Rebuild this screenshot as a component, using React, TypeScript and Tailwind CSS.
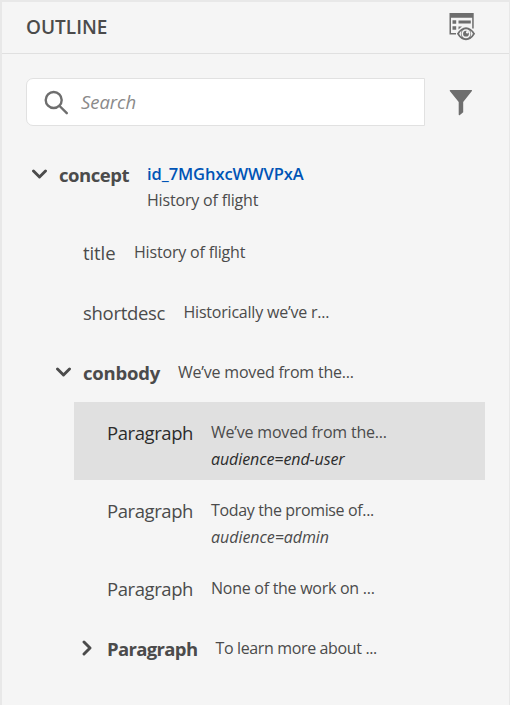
type Row = {
  name: string;
  nameClass: string;
  indent: string;
  text: string;
  textClass: string;
  bold?: boolean;
  id?: string;
  attr?: string;
  attrClass?: string;
  arrow?: "down" | "right";
  selected?: boolean;
};

const rows: Row[] = [
  { name: "concept", nameClass: "w-[88px] tracking-[-0.48px]", indent: "pl-[57px]", id: "id_7MGhxcWWVPxA", text: "History of flight", textClass: "tracking-[-0.18px]", bold: true, arrow: "down" },
  { name: "title", nameClass: "w-[51px] tracking-[-0.08px]", indent: "pl-[81px]", text: "History of flight", textClass: "tracking-[-0.18px]" },
  { name: "shortdesc", nameClass: "w-[100.5px] tracking-[-0.3px]", indent: "pl-[81px]", text: "Historically we’ve r...", textClass: "tracking-[-0.21px]" },
  { name: "conbody", nameClass: "w-[95px] tracking-[-0.22px]", indent: "pl-[81px]", text: "We’ve moved from the...", textClass: "tracking-[-0.21px]", bold: true, arrow: "down" },
  { name: "Paragraph", nameClass: "w-[104px] tracking-[-0.42px]", indent: "pl-[105px]", text: "We’ve moved from the...", textClass: "tracking-[-0.21px]", attr: "audience=end-user", attrClass: "tracking-[-0.08px]", selected: true },
  { name: "Paragraph", nameClass: "w-[104px] tracking-[-0.42px]", indent: "pl-[105px]", text: "Today the promise of...", textClass: "tracking-[-0.36px]", attr: "audience=admin", attrClass: "tracking-[-0.04px]" },
  { name: "Paragraph", nameClass: "w-[104px] tracking-[-0.42px]", indent: "pl-[105px]", text: "None of the work on ...", textClass: "tracking-[-0.27px]" },
  { name: "Paragraph", nameClass: "w-[108.5px] tracking-[-0.65px]", indent: "pl-[105px]", text: "To learn more about ...", textClass: "tracking-[-0.36px]", bold: true, arrow: "right" },
];

function Chevron({ direction }: { direction: "down" | "right" }) {
  return (
    <svg width="16" height="16" viewBox="0 0 16 16" fill="none" stroke="#4b4b4b" strokeWidth="2.9" strokeLinecap="round" strokeLinejoin="round">
      <path d={direction === "down" ? "M2.5 5l6 6 6-6" : "M5 2l6 6-6 6"} />
    </svg>
  );
}

function TreeRow({ row }: { row: Row }) {
  const twoLines = row.id || row.attr;
  return (
    <div className={`relative flex ${twoLines ? "h-[78px]" : "h-[60px]"} ${row.indent}`}>
      {row.selected && <div className="absolute inset-y-0 left-[72px] right-[24px] bg-[#e0e0e0]" />}
      <div className={`relative shrink-0 pt-[18px] text-[18.5px] leading-[26px] ${row.nameClass} ${row.bold ? "font-bold" : ""} ${row.selected ? "text-[#2c2c2c]" : "text-[#4b4b4b]"}`}>
        {row.arrow && (
          <span className="absolute top-[22px] -left-[28px]">
            <Chevron direction={row.arrow} />
          </span>
        )}
        {row.name}
      </div>
      <div className="relative whitespace-nowrap pt-[17px] text-[16px] leading-[26px] text-[#4b4b4b]">
        {row.id && <div className="text-[16.5px] font-semibold tracking-[-0.08px] text-[#0054b6]">{row.id}</div>}
        <div className={row.textClass}>{row.text}</div>
        {row.attr && <div className={`relative top-px italic ${row.attrClass} ${row.selected ? "text-[#2c2c2c]" : ""}`}>{row.attr}</div>}
      </div>
    </div>
  );
}

function PreviewIcon() {
  return (
    <svg width="27" height="29" viewBox="0 0 27 29" fill="#6e6e6e">
      <path d="M.5 0h24.2v15.5h-1.5V4.8H2v15.3h5v1.5H.5z" />
      <path d="M3.5 7.2h3.7v3.5H3.5zM9.5 7.5h12.3v3H9.5zM3.5 13.2h3.7v3.5H3.5zM9.5 13.5h3.5q-1.5 1-3.5 3z" />
      <path d="M7.9 20.7q4-6.5 9.1-6.5t9.1 6.5q-4 6.5-9.1 6.5t-9.1-6.5z" />
      <path d="M10.1 20.7q1-2 2.4-3.3-1.2 3.3 0 6.6-1.4-1.3-2.4-3.3zM23.9 20.7q-1-2-2.4-3.3 1.2 3.3 0 6.6 1.4-1.3 2.4-3.3z" fill="#f5f5f5" />
      <circle cx="17" cy="20.7" r="4.5" fill="#f5f5f5" />
      <circle cx="17" cy="20.7" r="2.9" />
      <circle cx="18.3" cy="19.3" r="1.3" fill="#f5f5f5" />
    </svg>
  );
}

export default function App() {
  return (
    <div className="h-[705px] w-[510px] overflow-hidden border-t-2 border-r border-l-2 border-[#e8e8e8] bg-[#f5f5f5] font-['Open_Sans','Noto_Sans',sans-serif]">
      <header className="flex h-[52px] justify-between border-b border-[#e0e0e0] pr-[33px] pl-6">
        <h1 className="pt-3 text-[19px] leading-[26px] font-semibold text-[#4b4b4b]">OUTLINE</h1>
        <div className="pt-[11px]">
          <PreviewIcon />
        </div>
      </header>
      <div className="mt-6 flex items-start pl-6">
        <div className="flex h-12 w-[399px] items-center rounded-l-[7px] border border-[#e1e1e1] bg-white pl-[17px]">
          <svg width="25" height="25" viewBox="0 0 25 25" fill="none" stroke="#6e6e6e" strokeWidth="2.4" strokeLinecap="round">
            <circle cx="9.7" cy="10" r="8" />
            <path d="M15.6 16l7.2 7.2" />
          </svg>
          <span className="pl-[12px] text-[18.5px] leading-[26px] tracking-[-0.05px] italic text-[#8a8a8a]">Search</span>
        </div>
        <svg className="mt-3 ml-6" width="24" height="26" viewBox="0 0 24 26" fill="#6e6e6e">
          <path d="M1.2 0h21.4q.8.3.3 1L14.2 12v10.2l-3.6 3q-.9.3-.9-.6V12L.8 1Q.4.3 1.2 0z" />
        </svg>
      </div>
      <main className="mt-[18px]">
        {rows.map((row, i) => (
          <TreeRow key={i} row={row} />
        ))}
      </main>
    </div>
  );
}
